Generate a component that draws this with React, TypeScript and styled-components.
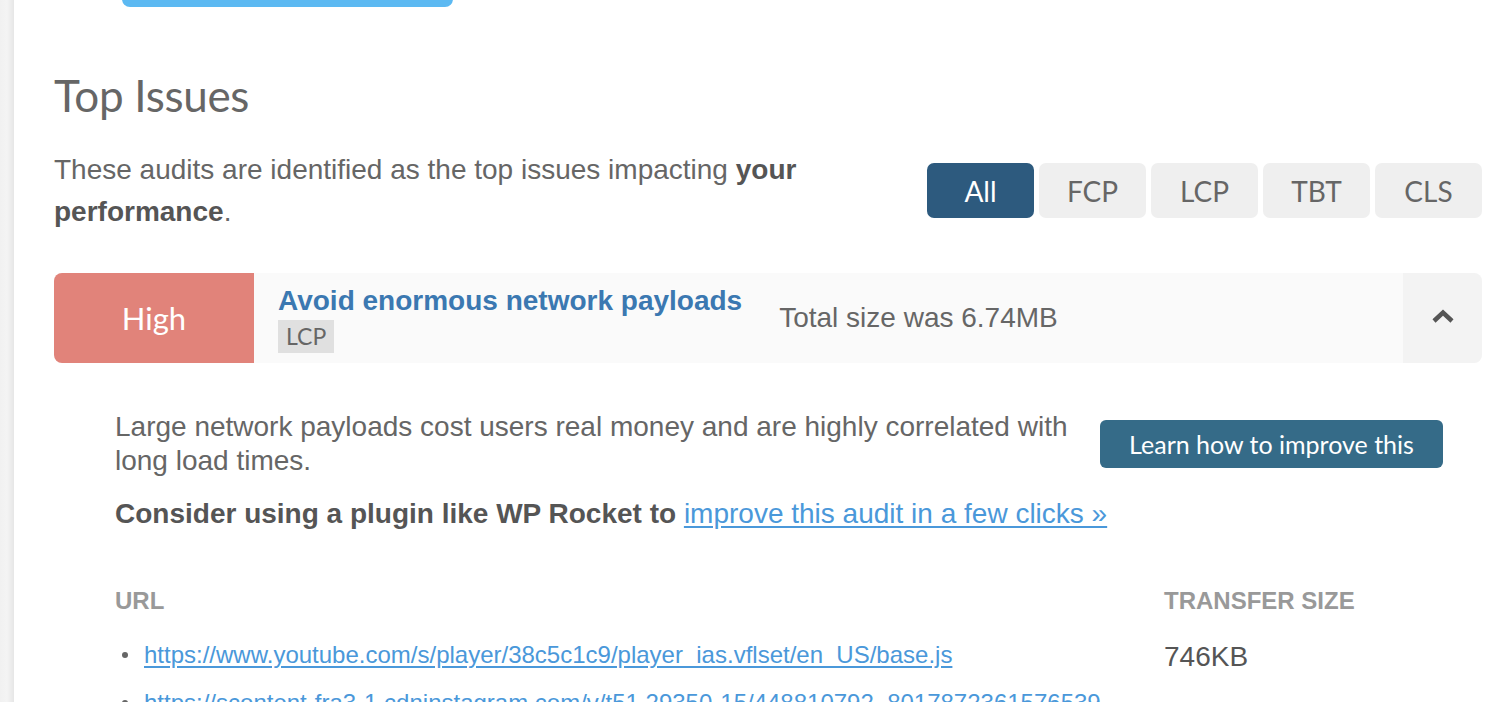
import React from 'react';
import styled, { createGlobalStyle } from 'styled-components';

const GlobalStyle = createGlobalStyle`
  html, body {
    margin: 0;
    padding: 0;
    background: #fff;
    overflow: hidden;
  }
  body {
    font-family: 'Liberation Sans', Arial, sans-serif;
    color: #666;
  }
`;

const filters = ['All', 'FCP', 'LCP', 'TBT', 'CLS'];

const resources = [
  {
    url: 'https://www.youtube.com/s/player/38c5c1c9/player_ias.vflset/en_US/base.js',
    size: '746KB',
  },
  {
    url: 'https://scontent-fra3-1.cdninstagram.com/v/t51.29350-15/448810792_8017872361576539_5839105830142516406_n.jpg?stp=dst-jpg_e35&efg=eyJ2ZW5jb2RlX3RhZyI6ImltYWdlX3VybGdlbi4xMDgweDEzNTAuc2RyLmYyOTM1MC5kZWZhdWx0X2ltYWdlIn0',
    size: '613KB',
  },
];

const App = () => {
  return (
    <Page>
      <GlobalStyle />
      <SideStrip />
      <Main>
        <TopButton />
        <Heading>Top Issues</Heading>
        <IntroRow>
          <Intro>
            These audits are identified as the top issues impacting <b>your performance</b>.
          </Intro>
          <FilterGroup>
            {filters.map((f) => (
              <FilterButton key={f} $active={f === 'All'}>
                {f}
              </FilterButton>
            ))}
          </FilterGroup>
        </IntroRow>

        <IssueRow>
          <Severity>High</Severity>
          <IssueInfo>
            <TitleBlock>
              <IssueTitle>Avoid enormous network payloads</IssueTitle>
              <Tag>LCP</Tag>
            </TitleBlock>
            <Summary>Total size was 6.74MB</Summary>
          </IssueInfo>
          <Toggle>
            <svg width="24" height="16" viewBox="0 0 24 16">
              <polyline
                points="3,13 12,4.5 21,13"
                fill="none"
                stroke="#555"
                strokeWidth="4.5"
                strokeLinecap="butt"
                strokeLinejoin="miter"
              />
            </svg>
          </Toggle>
        </IssueRow>

        <Details>
          <DetailTop>
            <Description>
              Large network payloads cost users real money and are highly correlated with long load
              times.
            </Description>
            <LearnButton>Learn how to improve this</LearnButton>
          </DetailTop>
          <Plugin>
            <b>Consider using a plugin like WP Rocket to</b>{' '}
            <BlueLink href="#">improve this audit in a few clicks »</BlueLink>
          </Plugin>

          <Table>
            <HeadCell>URL</HeadCell>
            <HeadCell>Transfer Size</HeadCell>
            {resources.map((r) => (
              <React.Fragment key={r.url}>
                <UrlCell>
                  <UrlLink href="#">{r.url}</UrlLink>
                </UrlCell>
                <SizeCell>{r.size}</SizeCell>
              </React.Fragment>
            ))}
          </Table>
        </Details>
      </Main>
    </Page>
  );
};

const Page = styled.div`
  display: flex;
  min-height: 702px;
`;

const SideStrip = styled.div`
  flex: 0 0 14px;
  background: linear-gradient(to right, #f1f1f1 0%, #f4f4f4 50%, #e6e6e6 100%);
`;

const Main = styled.div`
  flex: 1;
  min-width: 0;
  padding: 0 24px 0 40px;
`;

const TopButton = styled.div`
  margin: -33px 0 0 68px;
  width: 331px;
  height: 40px;
  border-radius: 8px;
  background: #5cb9f2;
`;

const Heading = styled.h2`
  margin: 62px 0 0;
  font-family: Lato, 'Open Sans', sans-serif;
  font-weight: 400;
  font-size: 44px;
  line-height: 1.2;
  color: #666;
  letter-spacing: -0.3px;
`;

const IntroRow = styled.div`
  display: flex;
  justify-content: space-between;
  align-items: center;
  margin-top: 27px;
`;

const Intro = styled.p`
  margin: 0;
  width: 800px;
  font-size: 28px;
  line-height: 42px;
  color: #666;

  b {
    color: #555;
  }
`;

const FilterGroup = styled.div`
  display: flex;
  gap: 5px;
`;

const FilterButton = styled.button<{ $active?: boolean }>`
  width: 107px;
  height: 55px;
  border: none;
  border-radius: 7px;
  padding: 0;
  font-family: Lato, 'Open Sans', sans-serif;
  font-size: 28px;
  background: ${(p) => (p.$active ? '#2d5a7e' : '#efefef')};
  color: ${(p) => (p.$active ? '#fff' : '#666')};
  cursor: pointer;
`;

const IssueRow = styled.div`
  display: flex;
  height: 90px;
  margin-top: 40px;
  border-radius: 8px;
  overflow: hidden;
  background: #fafafa;
`;

const Severity = styled.div`
  flex: 0 0 200px;
  display: flex;
  align-items: center;
  justify-content: center;
  background: #e1837a;
  color: #fff;
  font-family: Lato, 'Open Sans', sans-serif;
  font-size: 31px;
`;

const IssueInfo = styled.div`
  flex: 1;
  display: flex;
  align-items: center;
  padding-left: 24px;
`;

const TitleBlock = styled.div`
  display: flex;
  flex-direction: column;
  align-items: flex-start;
  padding-top: 3px;
`;

const IssueTitle = styled.div`
  font-size: 28px;
  line-height: 32px;
  font-weight: 700;
  color: #3b78b1;
`;

const Tag = styled.span`
  margin-top: 3px;
  height: 33px;
  padding: 0 8px;
  background: #e0e0e0;
  color: #666;
  font-family: Lato, 'Open Sans', sans-serif;
  font-size: 23px;
  line-height: 33px;
`;

const Summary = styled.div`
  margin-left: 37px;
  font-size: 28px;
  color: #666;
`;

const Toggle = styled.div`
  flex: 0 0 79px;
  display: flex;
  align-items: center;
  justify-content: center;
  padding-bottom: 3px;
  background: #f3f3f3;
`;

const Details = styled.div`
  padding: 47px 39px 0 61px;
`;

const DetailTop = styled.div`
  display: flex;
  align-items: center;
  gap: 24px;
`;

const Description = styled.p`
  flex: 1;
  margin: 0;
  font-size: 28px;
  line-height: 34px;
  color: #666;
`;

const LearnButton = styled.button`
  flex: 0 0 343px;
  height: 48px;
  border: none;
  border-radius: 6px;
  background: #356b88;
  color: #fff;
  font-family: Lato, 'Open Sans', sans-serif;
  font-size: 25px;
  cursor: pointer;
`;

const Plugin = styled.p`
  margin: 19px 0 0;
  font-size: 28px;
  line-height: 34px;
  color: #666;

  b {
    color: #555;
  }
`;

const BlueLink = styled.a`
  color: #4a98da;
  text-decoration: underline;
  text-underline-offset: 3px;
`;

const Table = styled.div`
  display: grid;
  grid-template-columns: 1fr 279px;
  column-gap: 40px;
  row-gap: 12px;
  margin-top: 55px;
  align-items: center;
`;

const HeadCell = styled.div`
  font-size: 24px;
  line-height: 30px;
  font-weight: 700;
  text-transform: uppercase;
  color: #999;
  margin-bottom: 9px;
`;

const UrlCell = styled.div`
  display: flex;
  align-items: flex-start;
  min-width: 0;

  &::before {
    content: '';
    flex: 0 0 6px;
    height: 6px;
    margin: 14px 16px 0 7px;
    border-radius: 50%;
    background: #666;
  }
`;

const UrlLink = styled.a`
  min-width: 0;
  font-size: 24px;
  line-height: 34px;
  color: #4a98da;
  text-decoration: underline;
  text-underline-offset: 3px;
  word-break: break-all;
`;

const SizeCell = styled.div`
  padding-top: 3px;
  font-size: 28px;
  line-height: 34px;
  color: #555;
`;

export default App;
